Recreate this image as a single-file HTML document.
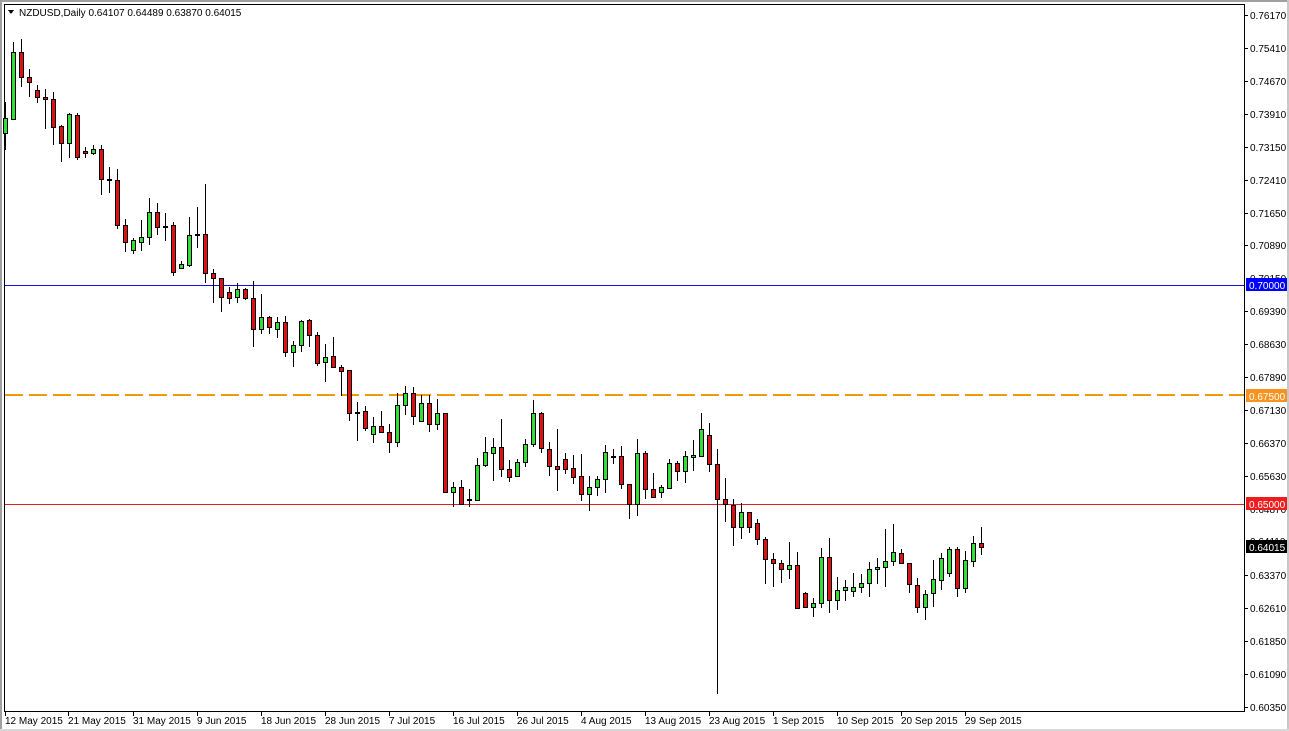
<!DOCTYPE html>
<html><head><meta charset="utf-8"><style>
html,body{margin:0;padding:0;background:#fff;width:1289px;height:731px;overflow:hidden}
svg{display:block}
text{font-family:"Liberation Sans",sans-serif;font-size:10px;fill:#000}
</style></head><body>
<svg width="1289" height="731" viewBox="0 0 1289 731" xmlns="http://www.w3.org/2000/svg" shape-rendering="crispEdges">
<rect x="0" y="0" width="1289" height="731" fill="#fff"/>
<rect x="0" y="0" width="1289" height="2" fill="#a0a0a0"/>
<rect x="0" y="0" width="2" height="731" fill="#a0a0a0"/>
<rect x="1287" y="0" width="2" height="731" fill="#c8c8c8"/>
<rect x="0" y="729" width="1289" height="2" fill="#d8d8d8"/>
<rect x="4" y="4" width="1240" height="1" fill="#000"/>
<rect x="4" y="4" width="1" height="708" fill="#000"/>
<rect x="1244" y="4" width="1" height="708" fill="#000"/>
<rect x="4" y="711" width="1241" height="1" fill="#000"/>
<rect x="5" y="285" width="1239" height="1" fill="#1010e0"/>
<line x1="5" y1="395" x2="1244" y2="395" stroke="#f0980c" stroke-width="2" stroke-dasharray="18 6" shape-rendering="auto"/>
<rect x="5" y="504" width="1239" height="1" fill="#e02020"/>
<polygon points="8,10 14,10 11,14" fill="#000"/>
<text x="19" y="16">NZDUSD,Daily  0.64107 0.64489 0.63870 0.64015</text>
<g stroke="#000" stroke-width="1">
<line x1="5.5" y1="102" x2="5.5" y2="150"/><rect x="3.5" y="118.5" width="4" height="15" fill="#33dd33"/>
<line x1="13.5" y1="42" x2="13.5" y2="119"/><rect x="11.5" y="52.5" width="4" height="67" fill="#33dd33"/>
<line x1="21.5" y1="39" x2="21.5" y2="87"/><rect x="19.5" y="52.5" width="4" height="25" fill="#dd1111"/>
<line x1="29.5" y1="69" x2="29.5" y2="97"/><rect x="27.5" y="77.5" width="4" height="5" fill="#dd1111"/>
<line x1="37.5" y1="85" x2="37.5" y2="103"/><rect x="35.5" y="90.5" width="4" height="7" fill="#dd1111"/>
<line x1="45.5" y1="89" x2="45.5" y2="129"/><rect x="43.5" y="97.5" width="4" height="2" fill="#dd1111"/>
<line x1="53.5" y1="92" x2="53.5" y2="145"/><rect x="51.5" y="99.5" width="4" height="28" fill="#dd1111"/>
<line x1="61.5" y1="125" x2="61.5" y2="162"/><rect x="59.5" y="126.5" width="4" height="17" fill="#dd1111"/>
<line x1="69.5" y1="113" x2="69.5" y2="158"/><rect x="67.5" y="114.5" width="4" height="29" fill="#33dd33"/>
<line x1="77.5" y1="113" x2="77.5" y2="160"/><rect x="75.5" y="115.5" width="4" height="42" fill="#dd1111"/>
<line x1="85.5" y1="147" x2="85.5" y2="158"/><rect x="83.5" y="151.5" width="4" height="2" fill="#dd1111"/>
<line x1="93.5" y1="145" x2="93.5" y2="155"/><rect x="91.5" y="149.5" width="4" height="4" fill="#33dd33"/>
<line x1="101.5" y1="145" x2="101.5" y2="195"/><rect x="99.5" y="149.5" width="4" height="30" fill="#dd1111"/>
<line x1="109.5" y1="167" x2="109.5" y2="193"/><rect x="107.5" y="179.5" width="4" height="1" fill="#dd1111"/>
<line x1="117.5" y1="169" x2="117.5" y2="229"/><rect x="115.5" y="180.5" width="4" height="45" fill="#dd1111"/>
<line x1="125.5" y1="219" x2="125.5" y2="252"/><rect x="123.5" y="225.5" width="4" height="17" fill="#dd1111"/>
<line x1="133.5" y1="238" x2="133.5" y2="254"/><rect x="131.5" y="240.5" width="4" height="10" fill="#33dd33"/>
<line x1="141.5" y1="220" x2="141.5" y2="251"/><rect x="139.5" y="237.5" width="4" height="5" fill="#33dd33"/>
<line x1="149.5" y1="198" x2="149.5" y2="245"/><rect x="147.5" y="212.5" width="4" height="25" fill="#33dd33"/>
<line x1="157.5" y1="203" x2="157.5" y2="235"/><rect x="155.5" y="212.5" width="4" height="15" fill="#dd1111"/>
<line x1="165.5" y1="213" x2="165.5" y2="241"/><rect x="163.5" y="226.5" width="4" height="1" fill="#dd1111"/>
<line x1="173.5" y1="222" x2="173.5" y2="276"/><rect x="171.5" y="225.5" width="4" height="47" fill="#dd1111"/>
<line x1="181.5" y1="261" x2="181.5" y2="269"/><rect x="179.5" y="264.5" width="4" height="4" fill="#33dd33"/>
<line x1="189.5" y1="217" x2="189.5" y2="267"/><rect x="187.5" y="235.5" width="4" height="30" fill="#33dd33"/>
<line x1="197.5" y1="207" x2="197.5" y2="248"/><rect x="195.5" y="234.5" width="4" height="1" fill="#dd1111"/>
<line x1="205.5" y1="184" x2="205.5" y2="283"/><rect x="203.5" y="234.5" width="4" height="39" fill="#dd1111"/>
<line x1="213.5" y1="269" x2="213.5" y2="303"/><rect x="211.5" y="273.5" width="4" height="5" fill="#dd1111"/>
<line x1="221.5" y1="278" x2="221.5" y2="312"/><rect x="219.5" y="278.5" width="4" height="19" fill="#dd1111"/>
<line x1="229.5" y1="287" x2="229.5" y2="304"/><rect x="227.5" y="292.5" width="4" height="6" fill="#dd1111"/>
<line x1="237.5" y1="283" x2="237.5" y2="303"/><rect x="235.5" y="289.5" width="4" height="8" fill="#33dd33"/>
<line x1="245.5" y1="288" x2="245.5" y2="300"/><rect x="243.5" y="289.5" width="4" height="9" fill="#dd1111"/>
<line x1="253.5" y1="281" x2="253.5" y2="347"/><rect x="251.5" y="298.5" width="4" height="31" fill="#dd1111"/>
<line x1="261.5" y1="294" x2="261.5" y2="334"/><rect x="259.5" y="317.5" width="4" height="12" fill="#33dd33"/>
<line x1="269.5" y1="316" x2="269.5" y2="334"/><rect x="267.5" y="317.5" width="4" height="10" fill="#dd1111"/>
<line x1="277.5" y1="317" x2="277.5" y2="338"/><rect x="275.5" y="322.5" width="4" height="7" fill="#33dd33"/>
<line x1="285.5" y1="316" x2="285.5" y2="357"/><rect x="283.5" y="322.5" width="4" height="30" fill="#dd1111"/>
<line x1="293.5" y1="341" x2="293.5" y2="367"/><rect x="291.5" y="345.5" width="4" height="7" fill="#33dd33"/>
<line x1="301.5" y1="320" x2="301.5" y2="352"/><rect x="299.5" y="321.5" width="4" height="24" fill="#33dd33"/>
<line x1="309.5" y1="319" x2="309.5" y2="347"/><rect x="307.5" y="320.5" width="4" height="15" fill="#dd1111"/>
<line x1="317.5" y1="332" x2="317.5" y2="366"/><rect x="315.5" y="335.5" width="4" height="28" fill="#dd1111"/>
<line x1="325.5" y1="344" x2="325.5" y2="382"/><rect x="323.5" y="357.5" width="4" height="5" fill="#33dd33"/>
<line x1="333.5" y1="337" x2="333.5" y2="368"/><rect x="331.5" y="356.5" width="4" height="11" fill="#dd1111"/>
<line x1="341.5" y1="365" x2="341.5" y2="396"/><rect x="339.5" y="367.5" width="4" height="4" fill="#dd1111"/>
<line x1="349.5" y1="370" x2="349.5" y2="421"/><rect x="347.5" y="370.5" width="4" height="43" fill="#dd1111"/>
<line x1="357.5" y1="402" x2="357.5" y2="441"/><rect x="355.5" y="412.5" width="4" height="1" fill="#33dd33"/>
<line x1="365.5" y1="406" x2="365.5" y2="431"/><rect x="363.5" y="411.5" width="4" height="17" fill="#dd1111"/>
<line x1="373.5" y1="417" x2="373.5" y2="443"/><rect x="371.5" y="426.5" width="4" height="8" fill="#33dd33"/>
<line x1="381.5" y1="411" x2="381.5" y2="433"/><rect x="379.5" y="426.5" width="4" height="6" fill="#dd1111"/>
<line x1="389.5" y1="424" x2="389.5" y2="453"/><rect x="387.5" y="432.5" width="4" height="10" fill="#dd1111"/>
<line x1="397.5" y1="393" x2="397.5" y2="447"/><rect x="395.5" y="405.5" width="4" height="37" fill="#33dd33"/>
<line x1="405.5" y1="386" x2="405.5" y2="415"/><rect x="403.5" y="393.5" width="4" height="12" fill="#33dd33"/>
<line x1="413.5" y1="387" x2="413.5" y2="425"/><rect x="411.5" y="393.5" width="4" height="23" fill="#dd1111"/>
<line x1="421.5" y1="395" x2="421.5" y2="422"/><rect x="419.5" y="403.5" width="4" height="18" fill="#33dd33"/>
<line x1="429.5" y1="395" x2="429.5" y2="432"/><rect x="427.5" y="403.5" width="4" height="21" fill="#dd1111"/>
<line x1="437.5" y1="399" x2="437.5" y2="430"/><rect x="435.5" y="413.5" width="4" height="11" fill="#33dd33"/>
<line x1="445.5" y1="413" x2="445.5" y2="493"/><rect x="443.5" y="413.5" width="4" height="79" fill="#dd1111"/>
<line x1="453.5" y1="482" x2="453.5" y2="507"/><rect x="451.5" y="487.5" width="4" height="5" fill="#33dd33"/>
<line x1="461.5" y1="480" x2="461.5" y2="505"/><rect x="459.5" y="487.5" width="4" height="17" fill="#dd1111"/>
<line x1="469.5" y1="489" x2="469.5" y2="507"/><rect x="467.5" y="499.5" width="4" height="1" fill="#dd1111"/>
<line x1="477.5" y1="458" x2="477.5" y2="501"/><rect x="475.5" y="465.5" width="4" height="35" fill="#33dd33"/>
<line x1="485.5" y1="437" x2="485.5" y2="467"/><rect x="483.5" y="452.5" width="4" height="13" fill="#33dd33"/>
<line x1="493.5" y1="438" x2="493.5" y2="481"/><rect x="491.5" y="447.5" width="4" height="6" fill="#33dd33"/>
<line x1="501.5" y1="419" x2="501.5" y2="477"/><rect x="499.5" y="447.5" width="4" height="22" fill="#dd1111"/>
<line x1="509.5" y1="460" x2="509.5" y2="482"/><rect x="507.5" y="469.5" width="4" height="8" fill="#dd1111"/>
<line x1="517.5" y1="459" x2="517.5" y2="477"/><rect x="515.5" y="462.5" width="4" height="14" fill="#33dd33"/>
<line x1="525.5" y1="439" x2="525.5" y2="467"/><rect x="523.5" y="444.5" width="4" height="18" fill="#33dd33"/>
<line x1="533.5" y1="400" x2="533.5" y2="447"/><rect x="531.5" y="413.5" width="4" height="31" fill="#33dd33"/>
<line x1="541.5" y1="412" x2="541.5" y2="453"/><rect x="539.5" y="413.5" width="4" height="35" fill="#dd1111"/>
<line x1="549.5" y1="442" x2="549.5" y2="476"/><rect x="547.5" y="449.5" width="4" height="17" fill="#dd1111"/>
<line x1="557.5" y1="429" x2="557.5" y2="491"/><rect x="555.5" y="466.5" width="4" height="3" fill="#dd1111"/>
<line x1="565.5" y1="453" x2="565.5" y2="474"/><rect x="563.5" y="459.5" width="4" height="10" fill="#dd1111"/>
<line x1="573.5" y1="455" x2="573.5" y2="484"/><rect x="571.5" y="468.5" width="4" height="9" fill="#dd1111"/>
<line x1="581.5" y1="454" x2="581.5" y2="501"/><rect x="579.5" y="476.5" width="4" height="18" fill="#dd1111"/>
<line x1="589.5" y1="476" x2="589.5" y2="511"/><rect x="587.5" y="487.5" width="4" height="7" fill="#33dd33"/>
<line x1="597.5" y1="476" x2="597.5" y2="496"/><rect x="595.5" y="479.5" width="4" height="8" fill="#33dd33"/>
<line x1="605.5" y1="445" x2="605.5" y2="493"/><rect x="603.5" y="452.5" width="4" height="27" fill="#33dd33"/>
<line x1="613.5" y1="449" x2="613.5" y2="464"/><rect x="611.5" y="456.5" width="4" height="1" fill="#dd1111"/>
<line x1="621.5" y1="446" x2="621.5" y2="489"/><rect x="619.5" y="456.5" width="4" height="28" fill="#dd1111"/>
<line x1="629.5" y1="484" x2="629.5" y2="519"/><rect x="627.5" y="484.5" width="4" height="20" fill="#dd1111"/>
<line x1="637.5" y1="439" x2="637.5" y2="516"/><rect x="635.5" y="453.5" width="4" height="51" fill="#33dd33"/>
<line x1="645.5" y1="451" x2="645.5" y2="499"/><rect x="643.5" y="453.5" width="4" height="36" fill="#dd1111"/>
<line x1="653.5" y1="473" x2="653.5" y2="498"/><rect x="651.5" y="489.5" width="4" height="8" fill="#dd1111"/>
<line x1="661.5" y1="485" x2="661.5" y2="498"/><rect x="659.5" y="487.5" width="4" height="5" fill="#33dd33"/>
<line x1="669.5" y1="459" x2="669.5" y2="489"/><rect x="667.5" y="463.5" width="4" height="25" fill="#33dd33"/>
<line x1="677.5" y1="461" x2="677.5" y2="481"/><rect x="675.5" y="463.5" width="4" height="8" fill="#dd1111"/>
<line x1="685.5" y1="451" x2="685.5" y2="483"/><rect x="683.5" y="456.5" width="4" height="15" fill="#33dd33"/>
<line x1="693.5" y1="440" x2="693.5" y2="471"/><rect x="691.5" y="455.5" width="4" height="2" fill="#33dd33"/>
<line x1="701.5" y1="413" x2="701.5" y2="457"/><rect x="699.5" y="429.5" width="4" height="27" fill="#33dd33"/>
<line x1="709.5" y1="423" x2="709.5" y2="472"/><rect x="707.5" y="435.5" width="4" height="29" fill="#dd1111"/>
<line x1="717.5" y1="449" x2="717.5" y2="694"/><rect x="715.5" y="464.5" width="4" height="35" fill="#dd1111"/>
<line x1="725.5" y1="478" x2="725.5" y2="522"/><rect x="723.5" y="499.5" width="4" height="5" fill="#dd1111"/>
<line x1="733.5" y1="499" x2="733.5" y2="546"/><rect x="731.5" y="505.5" width="4" height="22" fill="#dd1111"/>
<line x1="741.5" y1="503" x2="741.5" y2="539"/><rect x="739.5" y="512.5" width="4" height="15" fill="#33dd33"/>
<line x1="749.5" y1="512" x2="749.5" y2="533"/><rect x="747.5" y="512.5" width="4" height="15" fill="#dd1111"/>
<line x1="757.5" y1="519" x2="757.5" y2="545"/><rect x="755.5" y="523.5" width="4" height="16" fill="#dd1111"/>
<line x1="765.5" y1="537" x2="765.5" y2="584"/><rect x="763.5" y="539.5" width="4" height="20" fill="#dd1111"/>
<line x1="773.5" y1="553" x2="773.5" y2="587"/><rect x="771.5" y="559.5" width="4" height="4" fill="#dd1111"/>
<line x1="781.5" y1="560" x2="781.5" y2="583"/><rect x="779.5" y="563.5" width="4" height="6" fill="#dd1111"/>
<line x1="789.5" y1="542" x2="789.5" y2="579"/><rect x="787.5" y="565.5" width="4" height="4" fill="#33dd33"/>
<line x1="797.5" y1="552" x2="797.5" y2="609"/><rect x="795.5" y="565.5" width="4" height="43" fill="#dd1111"/>
<line x1="805.5" y1="592" x2="805.5" y2="608"/><rect x="803.5" y="593.5" width="4" height="14" fill="#dd1111"/>
<line x1="813.5" y1="598" x2="813.5" y2="617"/><rect x="811.5" y="603.5" width="4" height="4" fill="#33dd33"/>
<line x1="821.5" y1="548" x2="821.5" y2="608"/><rect x="819.5" y="557.5" width="4" height="46" fill="#33dd33"/>
<line x1="829.5" y1="538" x2="829.5" y2="613"/><rect x="827.5" y="557.5" width="4" height="43" fill="#dd1111"/>
<line x1="837.5" y1="577" x2="837.5" y2="610"/><rect x="835.5" y="590.5" width="4" height="10" fill="#33dd33"/>
<line x1="845.5" y1="580" x2="845.5" y2="601"/><rect x="843.5" y="587.5" width="4" height="3" fill="#33dd33"/>
<line x1="853.5" y1="573" x2="853.5" y2="597"/><rect x="851.5" y="587.5" width="4" height="4" fill="#33dd33"/>
<line x1="861.5" y1="574" x2="861.5" y2="593"/><rect x="859.5" y="583.5" width="4" height="4" fill="#33dd33"/>
<line x1="869.5" y1="562" x2="869.5" y2="597"/><rect x="867.5" y="569.5" width="4" height="14" fill="#33dd33"/>
<line x1="877.5" y1="558" x2="877.5" y2="584"/><rect x="875.5" y="567.5" width="4" height="2" fill="#33dd33"/>
<line x1="885.5" y1="529" x2="885.5" y2="587"/><rect x="883.5" y="561.5" width="4" height="6" fill="#33dd33"/>
<line x1="893.5" y1="524" x2="893.5" y2="566"/><rect x="891.5" y="552.5" width="4" height="9" fill="#33dd33"/>
<line x1="901.5" y1="549" x2="901.5" y2="564"/><rect x="899.5" y="553.5" width="4" height="10" fill="#dd1111"/>
<line x1="909.5" y1="563" x2="909.5" y2="593"/><rect x="907.5" y="563.5" width="4" height="21" fill="#dd1111"/>
<line x1="917.5" y1="578" x2="917.5" y2="613"/><rect x="915.5" y="585.5" width="4" height="22" fill="#dd1111"/>
<line x1="925.5" y1="590" x2="925.5" y2="620"/><rect x="923.5" y="594.5" width="4" height="13" fill="#33dd33"/>
<line x1="933.5" y1="560" x2="933.5" y2="607"/><rect x="931.5" y="579.5" width="4" height="14" fill="#33dd33"/>
<line x1="941.5" y1="553" x2="941.5" y2="590"/><rect x="939.5" y="558.5" width="4" height="22" fill="#33dd33"/>
<line x1="949.5" y1="547" x2="949.5" y2="577"/><rect x="947.5" y="549.5" width="4" height="24" fill="#33dd33"/>
<line x1="957.5" y1="547" x2="957.5" y2="597"/><rect x="955.5" y="549.5" width="4" height="39" fill="#dd1111"/>
<line x1="965.5" y1="551" x2="965.5" y2="593"/><rect x="963.5" y="560.5" width="4" height="28" fill="#33dd33"/>
<line x1="973.5" y1="536" x2="973.5" y2="567"/><rect x="971.5" y="543.5" width="4" height="18" fill="#33dd33"/>
<line x1="981.5" y1="527" x2="981.5" y2="555"/><rect x="979.5" y="543.5" width="4" height="4" fill="#dd1111"/>
</g>
<g fill="#000">
<rect x="1245" y="15" width="3" height="1"/><rect x="1245" y="48" width="3" height="1"/><rect x="1245" y="81" width="3" height="1"/><rect x="1245" y="114" width="3" height="1"/><rect x="1245" y="147" width="3" height="1"/><rect x="1245" y="180" width="3" height="1"/><rect x="1245" y="213" width="3" height="1"/><rect x="1245" y="245" width="3" height="1"/><rect x="1245" y="311" width="3" height="1"/><rect x="1245" y="344" width="3" height="1"/><rect x="1245" y="377" width="3" height="1"/><rect x="1245" y="410" width="3" height="1"/><rect x="1245" y="443" width="3" height="1"/><rect x="1245" y="476" width="3" height="1"/><rect x="1245" y="575" width="3" height="1"/><rect x="1245" y="608" width="3" height="1"/><rect x="1245" y="641" width="3" height="1"/><rect x="1245" y="674" width="3" height="1"/><rect x="1245" y="707" width="3" height="1"/>
</g>
<g>
<text x="1250" y="19">0.76170</text><text x="1250" y="52">0.75410</text><text x="1250" y="85">0.74670</text><text x="1250" y="118">0.73910</text><text x="1250" y="151">0.73150</text><text x="1250" y="184">0.72410</text><text x="1250" y="217">0.71650</text><text x="1250" y="249">0.70890</text><text x="1250" y="282">0.70150</text><text x="1250" y="315">0.69390</text><text x="1250" y="348">0.68630</text><text x="1250" y="381">0.67890</text><text x="1250" y="414">0.67130</text><text x="1250" y="447">0.66370</text><text x="1250" y="480">0.65630</text><text x="1250" y="513">0.64870</text><text x="1250" y="545">0.64110</text><text x="1250" y="579">0.63370</text><text x="1250" y="612">0.62610</text><text x="1250" y="645">0.61850</text><text x="1250" y="678">0.61090</text><text x="1250" y="711">0.60350</text>
</g>
<rect x="1246" y="278" width="41" height="13" fill="#0000ff"/><text x="1249" y="289" style="fill:#fff">0.70000</text>
<rect x="1246" y="389" width="41" height="13" fill="#f7931e"/><text x="1249" y="400" style="fill:#fff">0.67500</text>
<rect x="1246" y="497" width="41" height="13" fill="#ee1c1c"/><text x="1249" y="508" style="fill:#fff">0.65000</text>
<rect x="1246" y="540" width="41" height="13" fill="#000"/><text x="1249" y="551" style="fill:#fff">0.64015</text>
<g fill="#000">
<rect x="5" y="712" width="1" height="4"/><rect x="68" y="712" width="1" height="4"/><rect x="133" y="712" width="1" height="4"/><rect x="197" y="712" width="1" height="4"/><rect x="261" y="712" width="1" height="4"/><rect x="325" y="712" width="1" height="4"/><rect x="389" y="712" width="1" height="4"/><rect x="453" y="712" width="1" height="4"/><rect x="517" y="712" width="1" height="4"/><rect x="581" y="712" width="1" height="4"/><rect x="645" y="712" width="1" height="4"/><rect x="709" y="712" width="1" height="4"/><rect x="773" y="712" width="1" height="4"/><rect x="837" y="712" width="1" height="4"/><rect x="901" y="712" width="1" height="4"/><rect x="965" y="712" width="1" height="4"/>
</g>
<g>
<text x="5" y="724">12 May 2015</text><text x="68" y="724">21 May 2015</text><text x="133" y="724">31 May 2015</text><text x="197" y="724">9 Jun 2015</text><text x="261" y="724">18 Jun 2015</text><text x="325" y="724">28 Jun 2015</text><text x="389" y="724">7 Jul 2015</text><text x="453" y="724">16 Jul 2015</text><text x="517" y="724">26 Jul 2015</text><text x="581" y="724">4 Aug 2015</text><text x="645" y="724">13 Aug 2015</text><text x="709" y="724">23 Aug 2015</text><text x="773" y="724">1 Sep 2015</text><text x="837" y="724">10 Sep 2015</text><text x="901" y="724">20 Sep 2015</text><text x="965" y="724">29 Sep 2015</text>
</g>
</svg>
</body></html>
